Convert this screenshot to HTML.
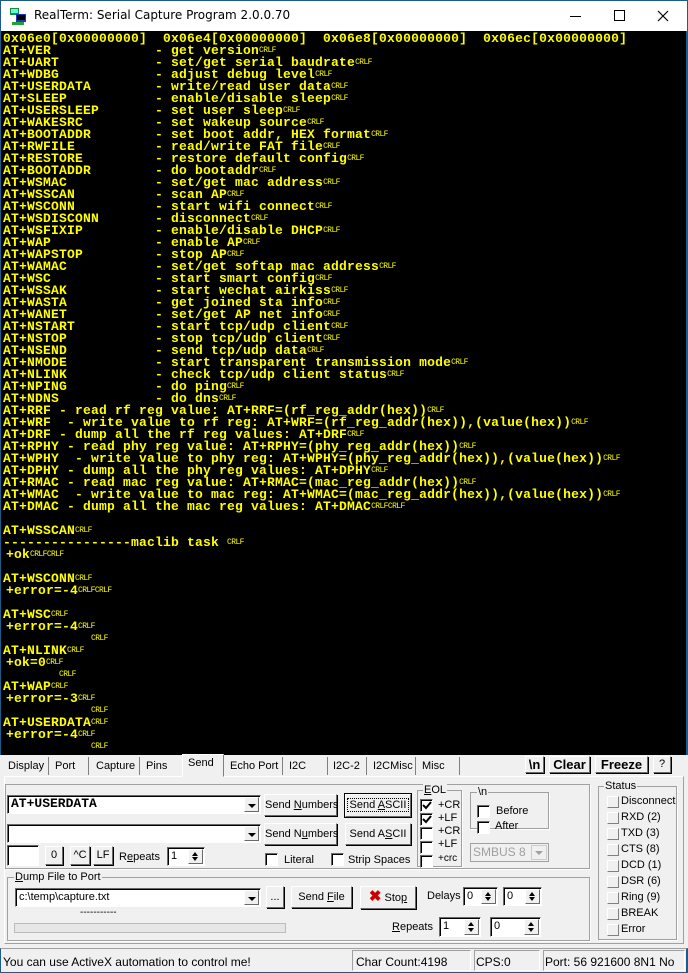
<!DOCTYPE html>
<html><head><meta charset="utf-8"><style>
*{box-sizing:border-box;margin:0;padding:0}
body{width:688px;height:973px;position:relative;overflow:hidden;background:#f0f0f0;font-family:"Liberation Sans",Arial,sans-serif;font-size:11px;color:#000}
.a{position:absolute}
#title{left:0;top:0;width:688px;height:31px;background:#fff;border:1px solid #1c5c8c;border-bottom:none}
#term{left:0;top:31px;width:688px;height:724px;background:#000;border-left:1px solid #1c5c8c;border-right:2px solid #1c5c8c;overflow:hidden}
pre{position:absolute;left:2px;top:2px;font-family:"Liberation Mono",monospace;font-weight:bold;font-size:13px;letter-spacing:0.2px;line-height:12px;color:#ffff00;white-space:pre}
.c{font-size:8px;letter-spacing:-0.6px;font-weight:normal;vertical-align:top}
.i{padding-left:3px}
.btn{position:absolute;background:#f0f0f0;border:1px solid;border-color:#fff #696969 #696969 #fff;box-shadow:1px 1px 0 #000;text-align:center;font-size:11px;line-height:20px;white-space:nowrap}
.in{position:absolute;background:#fff;border:1px solid;border-color:#696969 #fff #fff #696969;box-shadow:inset 1px 1px 0 #000;white-space:nowrap;padding-left:3px;line-height:16px}
.dd{position:absolute;right:1px;top:1px;width:15px;bottom:1px;background:#f0f0f0;border:1px solid;border-color:#fff #696969 #696969 #fff}
.dd:after{content:"";position:absolute;left:3px;top:6px;border:4px solid transparent;border-top:4px solid #000;border-bottom:none}
.sp{position:absolute;right:1px;top:1px;width:15px;bottom:1px;background:#f0f0f0;border:1px solid;border-color:#fff #696969 #696969 #fff}
.sp:before{content:"";position:absolute;left:3px;top:2px;border:3.5px solid transparent;border-bottom:4px solid #000;border-top:none}
.sp:after{content:"";position:absolute;left:3px;bottom:2px;border:3.5px solid transparent;border-top:4px solid #000;border-bottom:none}
.cb{position:absolute;width:13px;height:13px;background:#fff;border:1px solid;border-color:#696969 #fff #fff #696969;box-shadow:inset 1px 1px 0 #000}
.gb{position:absolute;border:1px solid #a0a0a0;box-shadow:1px 1px 0 #fff}
.lg{position:absolute;background:#f0f0f0;padding:0 1px;line-height:12px;top:-7px;white-space:nowrap}
.t{position:absolute;white-space:nowrap}
.tab{position:absolute;top:757px;height:18px;line-height:18px;border-right:1px solid #808080;padding-left:4px;font-size:11px;white-space:nowrap;overflow:hidden}
.led{position:absolute;width:12px;height:12px;border:1px solid;border-color:#fff #808080 #808080 #fff;left:607px}
.bb{font-weight:bold;font-size:13px}
</style></head><body>
<div id="title" class="a">
 <svg class="a" style="left:9px;top:7px" width="17" height="17"><rect x="0" y="0" width="9" height="7" fill="#1a8a3a"/><rect x="1" y="1" width="7" height="4" fill="#5fd"/><rect x="6" y="6" width="10" height="8" fill="#1838c0"/><rect x="7" y="7" width="8" height="5" fill="#000"/><rect x="2" y="14" width="12" height="3" fill="#25a12f"/></svg>
 <div class="t" style="left:33px;top:7px;font-size:12px;font-family:'DejaVu Sans',sans-serif">RealTerm: Serial Capture Program 2.0.0.70</div>
 <div class="a" style="left:569px;top:15px;width:11px;height:1px;background:#000"></div>
 <div class="a" style="left:613px;top:9px;width:11px;height:11px;border:1px solid #000"></div>
 <svg class="a" style="left:656px;top:9px" width="12" height="12"><path d="M1 1L11 11M11 1L1 11" stroke="#000" stroke-width="1.2"/></svg>
</div>
<div id="term" class="a"><pre>0x06e0[0x00000000]  0x06e4[0x00000000]  0x06e8[0x00000000]  0x06ec[0x00000000]
AT+VER             - get version<span class="c">CRLF</span>
AT+UART            - set/get serial baudrate<span class="c">CRLF</span>
AT+WDBG            - adjust debug level<span class="c">CRLF</span>
AT+USERDATA        - write/read user data<span class="c">CRLF</span>
AT+SLEEP           - enable/disable sleep<span class="c">CRLF</span>
AT+USERSLEEP       - set user sleep<span class="c">CRLF</span>
AT+WAKESRC         - set wakeup source<span class="c">CRLF</span>
AT+BOOTADDR        - set boot addr, HEX format<span class="c">CRLF</span>
AT+RWFILE          - read/write FAT file<span class="c">CRLF</span>
AT+RESTORE         - restore default config<span class="c">CRLF</span>
AT+BOOTADDR        - do bootaddr<span class="c">CRLF</span>
AT+WSMAC           - set/get mac address<span class="c">CRLF</span>
AT+WSSCAN          - scan AP<span class="c">CRLF</span>
AT+WSCONN          - start wifi connect<span class="c">CRLF</span>
AT+WSDISCONN       - disconnect<span class="c">CRLF</span>
AT+WSFIXIP         - enable/disable DHCP<span class="c">CRLF</span>
AT+WAP             - enable AP<span class="c">CRLF</span>
AT+WAPSTOP         - stop AP<span class="c">CRLF</span>
AT+WAMAC           - set/get softap mac address<span class="c">CRLF</span>
AT+WSC             - start smart config<span class="c">CRLF</span>
AT+WSSAK           - start wechat airkiss<span class="c">CRLF</span>
AT+WASTA           - get joined sta info<span class="c">CRLF</span>
AT+WANET           - set/get AP net info<span class="c">CRLF</span>
AT+NSTART          - start tcp/udp client<span class="c">CRLF</span>
AT+NSTOP           - stop tcp/udp client<span class="c">CRLF</span>
AT+NSEND           - send tcp/udp data<span class="c">CRLF</span>
AT+NMODE           - start transparent transmission mode<span class="c">CRLF</span>
AT+NLINK           - check tcp/udp client status<span class="c">CRLF</span>
AT+NPING           - do ping<span class="c">CRLF</span>
AT+NDNS            - do dns<span class="c">CRLF</span>
AT+RRF - read rf reg value: AT+RRF=(rf_reg_addr(hex))<span class="c">CRLF</span>
AT+WRF  - write value to rf reg: AT+WRF=(rf_reg_addr(hex)),(value(hex))<span class="c">CRLF</span>
AT+DRF - dump all the rf reg values: AT+DRF<span class="c">CRLF</span>
AT+RPHY - read phy reg value: AT+RPHY=(phy_reg_addr(hex))<span class="c">CRLF</span>
AT+WPHY  - write value to phy reg: AT+WPHY=(phy_reg_addr(hex)),(value(hex))<span class="c">CRLF</span>
AT+DPHY - dump all the phy reg values: AT+DPHY<span class="c">CRLF</span>
AT+RMAC - read mac reg value: AT+RMAC=(mac_reg_addr(hex))<span class="c">CRLF</span>
AT+WMAC  - write value to mac reg: AT+WMAC=(mac_reg_addr(hex)),(value(hex))<span class="c">CRLF</span>
AT+DMAC - dump all the mac reg values: AT+DMAC<span class="c">CRLFCRLF</span>

AT+WSSCAN<span class="c">CRLF</span>
----------------maclib task <span class="c">CRLF</span>
<span class="i">+ok<span class="c">CRLFCRLF</span></span>

AT+WSCONN<span class="c">CRLF</span>
<span class="i">+error=-4<span class="c">CRLFCRLF</span></span>

AT+WSC<span class="c">CRLF</span>
<span class="i">+error=-4<span class="c">CRLF</span></span>
           <span class="c">CRLF</span>
AT+NLINK<span class="c">CRLF</span>
<span class="i">+ok=0<span class="c">CRLF</span></span>
       <span class="c">CRLF</span>
AT+WAP<span class="c">CRLF</span>
<span class="i">+error=-3<span class="c">CRLF</span></span>
           <span class="c">CRLF</span>
AT+USERDATA<span class="c">CRLF</span>
<span class="i">+error=-4<span class="c">CRLF</span></span>
           <span class="c">CRLF</span></pre></div>

<!-- tabs -->
<div class="a" style="left:4px;top:776px;width:680px;height:168px;border:1px solid;border-color:#fff #a0a0a0 #a0a0a0 #fff"></div>
<div class="tab" style="left:4px;width:45px">Display</div>
<div class="tab" style="left:51px;width:38px">Port</div>
<div class="tab" style="left:92px;width:48px">Capture</div>
<div class="tab" style="left:142px;width:35px;border:none">Pins</div>
<div class="a" style="left:182px;top:754px;width:42px;height:23px;background:#f0f0f0;border:1px solid;border-color:#fff #808080 transparent #fff;padding:2px 0 0 5px">Send</div>
<div class="tab" style="left:226px;width:57px">Echo Port</div>
<div class="tab" style="left:285px;width:43px">I2C</div>
<div class="tab" style="left:329px;width:38px">I2C-2</div>
<div class="tab" style="left:369px;width:47px">I2CMisc</div>
<div class="tab" style="left:418px;width:42px">Misc</div>
<div class="btn bb" style="left:525px;top:756px;width:19px;height:17px;line-height:15px">\n</div>
<div class="btn bb" style="left:549px;top:756px;width:41px;height:17px;line-height:15px">Clear</div>
<div class="btn bb" style="left:595px;top:756px;width:53px;height:17px;line-height:15px">Freeze</div>
<div class="btn" style="left:653px;top:756px;width:18px;height:17px;line-height:15px">?</div>

<!-- send group -->
<div class="gb" style="left:5px;top:784px;width:585px;height:85px"></div>
<div class="in" style="left:7px;top:795px;width:254px;height:19px;font-family:'Liberation Mono',monospace;font-weight:bold;font-size:13px">AT+USERDATA<div class="dd"></div></div>
<div class="btn" style="left:264px;top:794px;width:73px;height:22px">Send <u>N</u>umbers</div>
<div class="btn" style="left:345px;top:794px;width:66px;height:23px;outline:1px solid #000"><span style="border:1px dotted #000;padding:0 2px">Send <u>A</u>SCII</span></div>
<div class="in" style="left:7px;top:824px;width:254px;height:19px"><div class="dd"></div></div>
<div class="btn" style="left:264px;top:823px;width:73px;height:22px">Send N<u>u</u>mbers</div>
<div class="btn" style="left:345px;top:823px;width:66px;height:22px">Send A<u>S</u>CII</div>
<div class="in" style="left:7px;top:845px;width:32px;height:21px"></div>
<div class="btn" style="left:45px;top:846px;width:18px;height:19px;line-height:17px">0</div>
<div class="btn" style="left:70px;top:846px;width:20px;height:19px;line-height:17px">^C</div>
<div class="btn" style="left:93px;top:846px;width:20px;height:19px;line-height:17px">LF</div>
<div class="t" style="left:119px;top:851px">R<u>e</u>peats</div>
<div class="in" style="left:167px;top:847px;width:38px;height:19px">1<div class="sp"></div></div>
<div class="cb" style="left:265px;top:853px"></div><div class="t" style="left:284px;top:854px">Literal</div>
<div class="cb" style="left:331px;top:853px"></div><div class="t" style="left:348px;top:854px">Strip Spaces</div>

<div class="gb" style="left:417px;top:790px;width:45px;height:77px"><div class="lg" style="left:5px"><u>E</u>OL</div></div>
<div class="cb" style="left:420px;top:799px"></div><svg class="a" style="left:422px;top:801px" width="10" height="10"><path d="M1 4L4 7L9 1" stroke="#000" stroke-width="2" fill="none"/></svg><div class="t" style="left:438px;top:799px">+CR</div>
<div class="cb" style="left:420px;top:813px"></div><svg class="a" style="left:422px;top:815px" width="10" height="10"><path d="M1 4L4 7L9 1" stroke="#000" stroke-width="2" fill="none"/></svg><div class="t" style="left:438px;top:812px">+LF</div>
<div class="cb" style="left:420px;top:827px"></div><div class="t" style="left:438px;top:825px">+CR</div>
<div class="cb" style="left:420px;top:841px"></div><div class="t" style="left:438px;top:838px">+LF</div>
<div class="cb" style="left:420px;top:855px"></div><div class="t" style="left:438px;top:853px;font-size:10px">+crc</div>

<div class="gb" style="left:470px;top:792px;width:79px;height:37px"><div class="lg" style="left:6px">\n</div></div>
<div class="cb" style="left:477px;top:805px"></div><div class="t" style="left:496px;top:805px">Before</div>
<div class="cb" style="left:477px;top:821px"></div><div class="t" style="left:495px;top:820px">After</div>
<div class="a" style="left:470px;top:843px;width:79px;height:19px;border:1px solid #a0a0a0;color:#a0a0a0;padding:1px 2px;background:#f0f0f0;font-size:12px">SMBUS 8<div class="a" style="right:1px;top:1px;width:16px;height:15px;border:1px solid #ccc"><div class="a" style="left:3px;top:5px;border:4px solid transparent;border-top:4px solid #a0a0a0;border-bottom:none"></div></div></div>

<!-- dump group -->
<div class="gb" style="left:7px;top:877px;width:583px;height:64px"><div class="lg" style="left:6px"><u>D</u>ump File to Port</div></div>
<div class="in" style="left:15px;top:888px;width:246px;height:19px">c:\temp\capture.txt<div class="dd"></div></div>
<div class="btn" style="left:266px;top:886px;width:18px;height:22px">...</div>
<div class="btn" style="left:291px;top:886px;width:61px;height:22px">Send <u>F</u>ile</div>
<div class="btn" style="left:360px;top:886px;width:56px;height:23px"><span style="color:#c00;font-weight:bold;font-size:15px">✖</span> Sto<u>p</u></div>
<div class="t" style="left:427px;top:890px">Delays</div>
<div class="in" style="left:463px;top:887px;width:35px;height:19px">0<div class="sp"></div></div>
<div class="in" style="left:503px;top:887px;width:39px;height:19px">0<div class="sp"></div></div>
<div class="t" style="left:80px;top:907px;font-size:10px">-----------</div>
<div class="a" style="left:14px;top:923px;width:272px;height:10px;border:1px solid #bcbcbc;background:#e6e6e6"></div>
<div class="t" style="left:392px;top:921px"><u>R</u>epeats</div>
<div class="in" style="left:439px;top:917px;width:42px;height:20px">1<div class="sp"></div></div>
<div class="in" style="left:490px;top:917px;width:51px;height:20px">0<div class="sp"></div></div>

<!-- status group -->
<div class="gb" style="left:598px;top:786px;width:79px;height:154px"><div class="lg" style="left:5px">Status</div></div>
<div class="led" style="top:796px"></div><div class="t" style="left:621px;top:795px">Disconnect</div>
<div class="led" style="top:812px"></div><div class="t" style="left:621px;top:811px">RXD (2)</div>
<div class="led" style="top:828px"></div><div class="t" style="left:621px;top:827px">TXD (3)</div>
<div class="led" style="top:844px"></div><div class="t" style="left:621px;top:843px">CTS (8)</div>
<div class="led" style="top:860px"></div><div class="t" style="left:621px;top:859px">DCD (1)</div>
<div class="led" style="top:876px"></div><div class="t" style="left:621px;top:875px">DSR (6)</div>
<div class="led" style="top:892px"></div><div class="t" style="left:621px;top:891px">Ring (9)</div>
<div class="led" style="top:908px"></div><div class="t" style="left:621px;top:907px">BREAK</div>
<div class="led" style="top:924px"></div><div class="t" style="left:621px;top:923px">Error</div>

<!-- status bar -->
<div class="a" style="left:0;top:948px;width:688px;height:25px;border-top:1px solid #a0a0a0;border-left:1px solid #1c5c8c;border-right:2px solid #1c5c8c;border-bottom:1px solid #1c5c8c"></div>
<div class="t" style="left:3px;top:955px;font-size:12px">You can use ActiveX automation to control me!</div>
<div class="a" style="left:352px;top:950px;width:119px;height:21px;border:1px solid;border-color:#a0a0a0 #fff #fff #a0a0a0"></div><div class="t" style="left:356px;top:955px;font-size:12px">Char Count:4198</div>
<div class="a" style="left:474px;top:950px;width:66px;height:21px;border:1px solid;border-color:#a0a0a0 #fff #fff #a0a0a0"></div><div class="t" style="left:476px;top:955px;font-size:12px">CPS:0</div>
<div class="a" style="left:543px;top:950px;width:142px;height:21px;border:1px solid;border-color:#a0a0a0 #fff #fff #a0a0a0"></div><div class="t" style="left:545px;top:955px;font-size:12px">Port: 56 921600 8N1 No</div>
</body></html>
